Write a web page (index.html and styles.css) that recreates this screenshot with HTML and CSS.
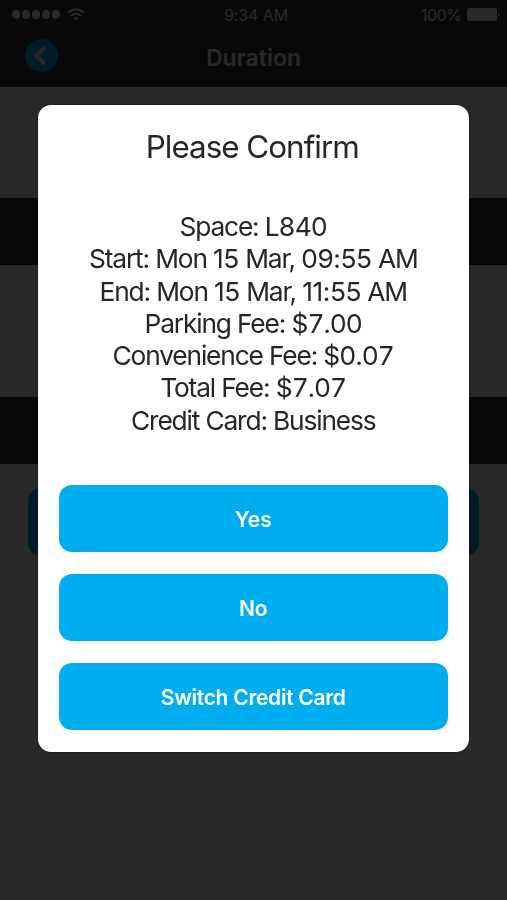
FILE: index.html
```html
<!DOCTYPE html>
<html lang="en">
    <head>
        <meta charset="utf-8">
        <meta name="viewport" content="width=device-width, initial-scale=1">
        <title>Duration</title>
        <link rel="stylesheet" href="styles.css">
    </head>
    <body>
        <!--The parking screen, it stays visible behind the dialog-->
        <div class="screen">
            <div class="header">
                <div class="status-bar">
                    <div class="status-left">
                        <div class="signal">
                            <span></span><span></span><span></span><span></span><span></span>
                        </div>
                        <svg class="wifi" width="18" height="13" viewBox="0 0 18 13" fill="none" stroke="currentColor" stroke-width="2">
                            <path d="M1 4.6C5.6 .3 12.4 .3 17 4.6"/>
                            <path d="M4 7.8C6.9 5.2 11.1 5.2 14 7.8"/>
                            <path d="M6.3 10.2Q9 7.7 11.7 10.2L9 12.8Z" fill="currentColor" stroke="none"/>
                        </svg>
                    </div>
                    <div class="time">9:34 AM</div>
                    <div class="status-right">
                        <span class="percent">100%</span>
                        <svg width="33" height="13" viewBox="0 0 33 13" fill="currentColor">
                            <rect x="0" y="0" width="30" height="13" rx="2.5"/>
                            <path d="M31 4.2Q32.6 5 32.6 6.5T31 8.8Z"/>
                        </svg>
                    </div>
                </div>
                <div class="nav">
                    <div class="back">
                        <svg width="33" height="33" viewBox="0 0 33 33" fill="none" stroke="currentColor" stroke-width="4">
                            <path d="M19.7 8.6L11.2 16.6L19.7 24.8"/>
                        </svg>
                    </div>
                    <div class="nav-title">Duration</div>
                    <div></div>
                </div>
            </div>
            <div class="panel first"></div>
            <div class="band"></div>
            <div class="panel"></div>
            <div class="band"></div>
            <div class="footer">
                <div class="submit"></div>
            </div>
        </div>

        <!--Confirmation dialog-->
        <div class="modal">
            <div class="modal-content">
                <div class="modal-title">Please Confirm</div>
                <div class="details">
                    <div>Space: L<span class="fee">840</span></div>
                    <div>Start: Mon <span class="date">15</span> Mar, <span class="date">09:55</span> AM</div>
                    <div>End: Mon <span class="date">15</span> Mar, <span class="date">11:55</span> AM</div>
                    <div>Parking Fee: <span class="fee">$7.00</span></div>
                    <div>Convenience Fee: <span class="fee">$0.07</span></div>
                    <div>Total Fee: <span class="fee">$7.07</span></div>
                    <div>Credit Card: Business</div>
                </div>
                <div class="buttons">
                    <button class="button">Yes</button>
                    <button class="button">No</button>
                    <button class="button switch">Switch Credit Card</button>
                </div>
            </div>
        </div>
    </body>
</html>
```
FILE: styles.css
```css
html {box-sizing: border-box;}
*, *:before, *:after {
    box-sizing: inherit;
}

body {
    margin: 0;
    font-family: Inter, "Liberation Sans", sans-serif;
    background-color: white;
}

svg {
    display: block;
}

.screen {
    height: 900px;
    overflow: hidden;
}

.header {
    height: 87px;
    background-color: #323232;
    color: white;
}

.status-bar {
    display: grid;
    grid-template-columns: 1fr auto 1fr;
    align-items: center;
    height: 29px;
    padding: 0 7px 0 12px;
    font-size: 16px;
}

.status-left {
    display: flex;
    align-items: center;
    gap: 7px;
}

.signal {
    display: flex;
    gap: 1.8px;
}

.signal span {
    width: 8.2px;
    height: 8.2px;
    border-radius: 50%;
    background-color: white;
}

.time {
    letter-spacing: -0.1px;
}

.status-right {
    display: flex;
    align-items: center;
    justify-content: flex-end;
    gap: 6px;
}

.percent {
    letter-spacing: -0.6px;
}

.nav {
    display: grid;
    grid-template-columns: 1fr auto 1fr;
    align-items: center;
    height: 52px;
    padding: 0 25px;
}

.back {
    width: 33px;
    height: 33px;
    border-radius: 50%;
    background-color: #00aeef;
}

.nav-title {
    padding-top: 5px;
    font-size: 23px;
    font-weight: 600;
}

.panel {
    height: 132px;
}

.panel.first {
    height: 111px;
}

.band {
    height: 67px;
    background-color: #323232;
}

.footer {
    padding: 24px 28px;
}

.submit {
    height: 68px;
    border-radius: 13px;
    background-color: #00aeef;
}

/*Dark layer over the whole screen*/
.modal {
    position: fixed;
    top: 0;
    left: 0;
    width: 100%;
    height: 100%;
    padding: 105px 38px 0 37.5px;
    background-color: rgba(0,0,0,0.84);
}

.modal-content {
    height: 646.5px;
    padding: 22px 21.5px;
    border-radius: 13px;
    background-color: white;
    box-shadow: 0 0 2px #000;
    color: #262626;
    text-align: center;
}

.modal-title {
    padding-right: 2px;
    font-size: 31.4px;
    line-height: 41px;
    letter-spacing: -1px;
}

.details {
    padding-top: 43px;
    font-size: 26.3px;
    line-height: 32.3px;
    letter-spacing: -1.15px;
    white-space: nowrap;
}

.date {
    letter-spacing: -0.4px;
}

.fee {
    font-variant-numeric: tabular-nums;
    letter-spacing: -0.9px;
}

.buttons {
    display: flex;
    flex-direction: column;
    gap: 22px;
    padding-top: 47.9px;
}

.button {
    height: 67px;
    padding: 2px 0 0;
    border: none;
    border-radius: 13px;
    background-color: #00aeef;
    color: white;
    font-family: inherit;
    font-size: 21px;
    font-weight: 600;
}

.switch {
    letter-spacing: -0.28px;
}
```
